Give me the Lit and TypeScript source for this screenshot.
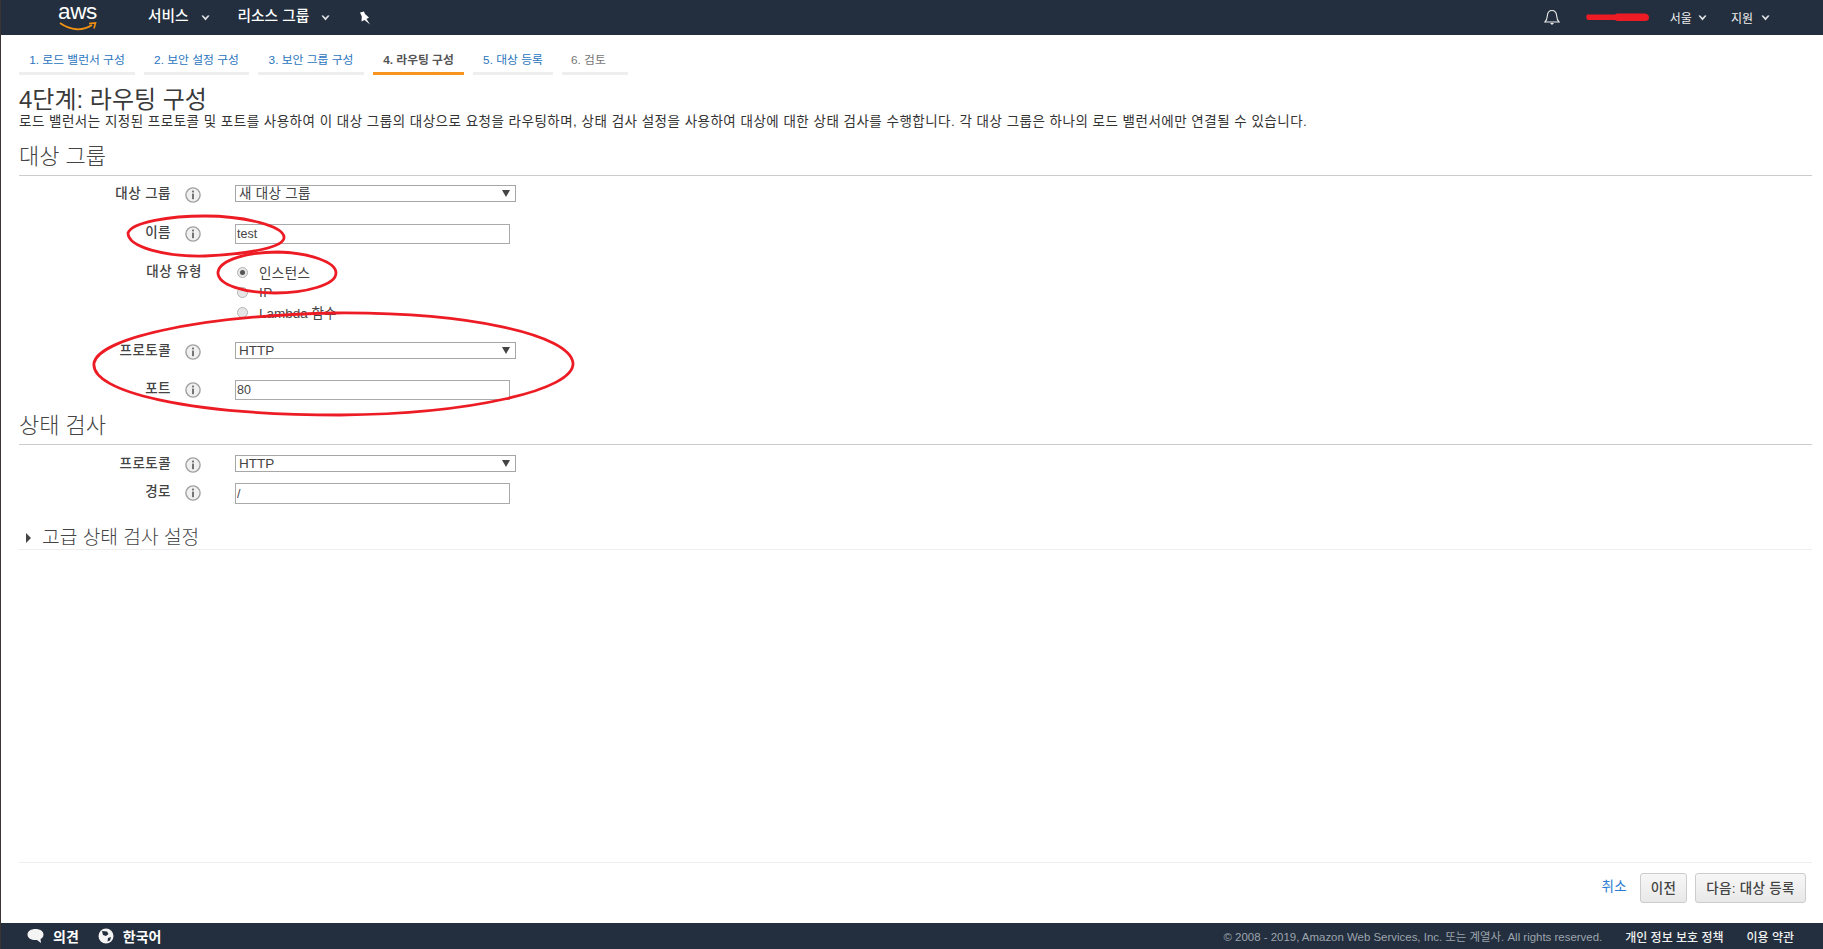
import { LitElement, html, css, svg } from "lit";
import { customElement } from "lit/decorators.js";

const caret = html`<svg class="caret" width="9" height="6" viewBox="0 0 9 6"><path d="M0.5 0.8 L4.5 5.4 L8.5 0.8 L7 0.2 L4.5 2.8 L2 0.2 Z" fill="#dfe2e5"/></svg>`;
const info = html`<svg class="info" width="16" height="16" viewBox="0 0 16 16"><circle cx="8" cy="8" r="7.1" fill="#f0f0f0" stroke="#a0a0a0" stroke-width="1.4"/><rect x="7.1" y="6.6" width="1.8" height="5.6" fill="#666"/><rect x="7.1" y="3.6" width="1.8" height="1.8" fill="#666"/></svg>`;

@customElement("app-root")
export class AppRoot extends LitElement {
  static styles = css`
    :host { display: flex; flex-direction: column; height: 949px; width: 1823px; overflow: hidden; position: relative; box-sizing: border-box; border-left: 1px solid #3b3533; background: #fff; color: #444; font-family: "Liberation Sans", "Noto Sans CJK KR", sans-serif; font-size: 13px; }
    * { box-sizing: border-box; }
    .nav { height: 35px; flex: none; background: #232f3e; color: #fff; display: flex; align-items: center; font-size: 14.7px; padding-bottom: 3px; }
    .logo { margin-left: 58px; width: 37px; height: 32px; position: relative; flex: none; display: flex; justify-content: center; margin-top: 1px; }
    .logo span { font-size: 22.5px; line-height: 22px; letter-spacing: -0.3px; }
    .logo svg { position: absolute; left: 0; top: 19px; }
    .menu { display: flex; align-items: center; gap: 12px; font-weight: 500; line-height: 20px; margin-top: -1px; }
    .menu .caret { margin-top: 5px; }
    .menu.svc { margin-left: 52px; }
    .menu.res { margin-left: 28px; }
    .pin { margin-left: 29px; margin-top: 3px; }
    .spacer { flex: 1; }
    .bell { margin-right: 25px; margin-top: 3px; }
    .acct { margin-right: 21px; margin-top: 3px; display: block; }
    .region { display: flex; align-items: center; gap: 8px; font-size: 12px; color: #eee; margin-right: 26px; margin-top: 3px; }
    .region.first { gap: 6px; margin-right: 24px; }
    .region.last { margin-right: 53px; }
    .tabs { display: flex; height: 40px; padding-left: 18px; gap: 9px; flex: none; }
    .tab { height: 40px; border-bottom: 3px solid #eee; color: #2a75bd; font-size: 11.8px; padding-top: 16px; line-height: 18px; text-align: center; white-space: nowrap; }
    .tab.cur { border-bottom-color: #f7941d; color: #555; font-weight: 700; }
    .tab.off { color: #777; text-align: left; padding-left: 9px; }
    .content { flex: 1; padding: 0 11px 0 18px; display: flex; flex-direction: column; min-height: 0; }
    h1 { margin: 10px 0 0; font-size: 24px; font-weight: 400; line-height: 30px; color: #3a3a3a; }
    .desc { line-height: 18px; margin-top: -2px; color: #333; font-size: 13.5px; letter-spacing: 0.485px; white-space: nowrap; }
    h2 { margin: 0; font-size: 22px; font-weight: 300; color: #444; border-bottom: 1px solid #ccc; height: 45px; line-height: 51px; }
    .rows { display: flex; flex-direction: column; padding-top: 9px; }
    .row { display: grid; grid-template-columns: 152px 64px 1fr; align-items: start; }
    .lab { text-align: right; font-weight: 500; font-size: 13.5px; letter-spacing: 0.45px; color: #444; line-height: 18px; margin-bottom: -1px; }
    .info { margin: 2px 0 -1px 14px; display: block; }
    .wide { grid-column: 1 / 3; padding-right: 33px; line-height: 20px; }
    .select { width: 281px; height: 17px; border: 1px solid #a6a6a6; display: flex; align-items: center; justify-content: space-between; padding: 0 5px 0 3px; font-size: 13.5px; letter-spacing: 0.3px; color: #444; line-height: 15px; background: #fff; }
    .select.latin { letter-spacing: 0; }
    .select svg { flex: none; }
    input.text { width: 275px; height: 20px; border: 1px solid #aaa; padding: 0 1px; margin: 0; font: inherit; font-size: 12.5px; color: #444; display: block; outline: none; border-radius: 0; background: #fff; }
    input.tall { height: 21px; }
    .radios { display: flex; flex-direction: column; }
    .radio { height: 20px; display: flex; align-items: center; gap: 11px; padding-left: 2px; color: #444; font-size: 13.5px; letter-spacing: 0.4px; }
    .radio.tight { letter-spacing: 0; }
    .dot { width: 11px; height: 11px; border-radius: 50%; border: 1px solid #b4b4b4; background: #e6e6e6; flex: none; display: flex; align-items: center; justify-content: center; }
    .dot.on::after { content: ""; width: 5px; height: 5px; border-radius: 50%; background: #555; }
    .m22 { margin-bottom: 22px; } .m18 { margin-bottom: 18px; } .m20 { margin-bottom: 20px; } .m21 { margin-bottom: 21px; } .m11 { margin-bottom: 11px; }
    .s2 { padding-top: 10px; }
    .adv { margin-top: 22px; height: 24px; border-bottom: 1px solid #eee; display: flex; align-items: center; gap: 11px; padding-left: 7px; font-size: 19.2px; font-weight: 300; line-height: 22px; color: #444; }
    .grow { flex: 1; }
    .actions { flex: none; height: 61px; border-top: 1px solid #eee; display: flex; justify-content: flex-end; align-items: flex-start; padding: 10px 6px 0 0; }
    .cancel { color: #2b7bd0; margin: 6px 13px 0 0; font-size: 13.5px; letter-spacing: 0.3px; line-height: 16px; }
    .btn { height: 30px; border: 1px solid #ccc; border-radius: 3px; background: linear-gradient(#f7f7f7, #e8e8e8); color: #444; font: inherit; font-size: 13.5px; letter-spacing: 0.3px; font-weight: 500; padding: 0 0 2px; display: flex; align-items: center; justify-content: center; }
    .btn.prev { width: 47px; margin-right: 8px; }
    .btn.next { width: 111px; }
    .foot { flex: none; height: 26px; background: #232f3e; color: #fff; display: flex; align-items: center; font-size: 14px; font-weight: 700; padding-left: 26px; }
    .foot .fi { margin-right: 9px; display: block; }
    .foot .t1 { margin-right: 19px; }
    .copy { color: #9da4ad; font-size: 11.45px; font-weight: 400; margin-right: 23px; white-space: nowrap; }
    .fl { font-size: 12px; font-weight: 500; color: #f0f0f0; white-space: nowrap; }
    .fl.a { margin-right: 23px; }
    .fl.b { margin-right: 29px; }
    .marks { position: absolute; left: -1px; top: 0; pointer-events: none; }
  `;

  private sel(text: string, latin = false) {
    return html`<div class="select ${latin ? "latin" : ""}"><span>${text}</span><svg width="8" height="7" viewBox="0 0 8 7"><path d="M0 0 H8 L4 7 Z" fill="#444"/></svg></div>`;
  }

  render() {
    return html`
      <div class="nav">
        <div class="logo"><span>aws</span>
          <svg width="38" height="12" viewBox="0 0 38 12"><path d="M1 3 C12 11 24 11 33 5" fill="none" stroke="#f29111" stroke-width="1.8"/><path d="M30 3.6 L36.5 3 L35 8.5" fill="none" stroke="#f29111" stroke-width="1.6"/></svg>
        </div>
        <div class="menu svc">서비스 ${caret}</div>
        <div class="menu res">리소스 그룹 ${caret}</div>
        <svg class="pin" width="12" height="14" viewBox="0 0 12 14"><path d="M1 1.5 L5 0.5 L6 3 L10 6.5 L7.5 8 L11 13.5 L5.5 9 L2.5 10.5 L2.8 5.5 Z" fill="#fff"/></svg>
        <div class="spacer"></div>
        <svg class="bell" width="16" height="17" viewBox="0 0 16 17"><path d="M1 13 C3 11 3.2 9 3.4 6.5 C3.7 3 5.5 1.5 8 1.5 C10.5 1.5 12.3 3 12.6 6.5 C12.8 9 13 11 15 13 Z" fill="none" stroke="#eee" stroke-width="1.1"/><path d="M6 14 H10 L8 16 Z" fill="#eee"/></svg>
        <svg class="acct" width="64" height="9" viewBox="0 0 64 9"><path d="M2 1.5 H30 L32 0.5 H60 Q64 1 64 4.5 Q64 8 60 8 L32 8 L30 7 H3 Q0 5 2 1.5 Z" fill="#ed1c24"/></svg>
        <div class="region first">서울 ${caret}</div>
        <div class="region last">지원 ${caret}</div>
      </div>
      <div class="tabs">
        <div class="tab" style="width:116px">1. 로드 밸런서 구성</div>
        <div class="tab" style="width:105px">2. 보안 설정 구성</div>
        <div class="tab" style="width:106px">3. 보안 그룹 구성</div>
        <div class="tab cur" style="width:91px">4. 라우팅 구성</div>
        <div class="tab" style="width:80px">5. 대상 등록</div>
        <div class="tab off" style="width:66px">6. 검토</div>
      </div>
      <div class="content">
        <h1>4단계: 라우팅 구성</h1>
        <div class="desc">로드 밸런서는 지정된 프로토콜 및 포트를 사용하여 이 대상 그룹의 대상으로 요청을 라우팅하며, 상태 검사 설정을 사용하여 대상에 대한 상태 검사를 수행합니다. 각 대상 그룹은 하나의 로드 밸런서에만 연결될 수 있습니다.</div>
        <h2>대상 그룹</h2>
        <div class="rows">
          <div class="row m22"><div class="lab">대상 그룹</div>${info}${this.sel("새 대상 그룹")}</div>
          <div class="row m18"><div class="lab">이름</div>${info}<input class="text" .value=${"test"} /></div>
          <div class="row m20"><div class="lab wide">대상 유형</div>
            <div class="radios">
              <div class="radio"><span class="dot on"></span>인스턴스</div>
              <div class="radio"><span class="dot"></span>IP</div>
              <div class="radio tight"><span class="dot"></span>Lambda 함수</div>
            </div>
          </div>
          <div class="row m21"><div class="lab">프로토콜</div>${info}${this.sel("HTTP", true)}</div>
          <div class="row"><div class="lab">포트</div>${info}<input class="text" .value=${"80"} /></div>
        </div>
        <h2>상태 검사</h2>
        <div class="rows s2">
          <div class="row m11"><div class="lab">프로토콜</div>${info}${this.sel("HTTP", true)}</div>
          <div class="row"><div class="lab">경로</div>${info}<input class="text tall" .value=${"/"} /></div>
        </div>
        <div class="adv"><svg width="5" height="10" viewBox="0 0 5 10"><path d="M0 0 L5 5 L0 10 Z" fill="#444"/></svg>고급 상태 검사 설정</div>
        <div class="grow"></div>
        <div class="actions">
          <span class="cancel">취소</span>
          <button class="btn prev">이전</button>
          <button class="btn next">다음: 대상 등록</button>
        </div>
      </div>
      <div class="foot">
        <svg class="fi" width="17" height="16" viewBox="0 0 17 16"><path d="M8.5 1 C13 1 16.5 3.2 16.5 6.5 C16.5 9 14.8 10.5 13.5 11 L14 15 L10 12 C5 12.5 0.5 10.5 0.5 6.5 C0.5 3.2 4 1 8.5 1 Z" fill="#f4f4f4"/></svg>
        <span class="t1">의견</span>
        <svg class="fi" width="16" height="16" viewBox="0 0 16 16"><circle cx="8" cy="8" r="7.5" fill="#f4f4f4"/><path d="M4 3 L9 3.5 L10.5 6 L8 8 L5 7 Z M10 10 L13 9 L12 12.5 L9.5 13.5 Z" fill="#232f3e"/></svg>
        <span>한국어</span>
        <div class="spacer"></div>
        <span class="copy">© 2008 - 2019, Amazon Web Services, Inc. 또는 계열사. All rights reserved.</span>
        <span class="fl a">개인 정보 보호 정책</span>
        <span class="fl b">이용 약관</span>
      </div>
      <svg class="marks" width="1823" height="949" viewBox="0 0 1823 949">
        ${svg`<g fill="none" stroke="#ed1c24" stroke-width="2.8">
          <path d="M128 233 C132 222 170 216 205 216 C245 216 283 226 284 237 C285 247 250 254 205 256 C165 257 128 247 128 233 Z"/>
          <path d="M218 272 C220 259 250 252 278 252 C310 253 336 262 336 273 C336 285 305 293 275 293 C245 293 217 285 218 272 Z"/>
          <path d="M94 363 C98 340 190 316 335 313 C470 312 570 335 573 363 C575 390 470 414 340 415 C190 415 90 392 94 363 Z"/>
        </g>`}
      </svg>
    `;
  }
}
